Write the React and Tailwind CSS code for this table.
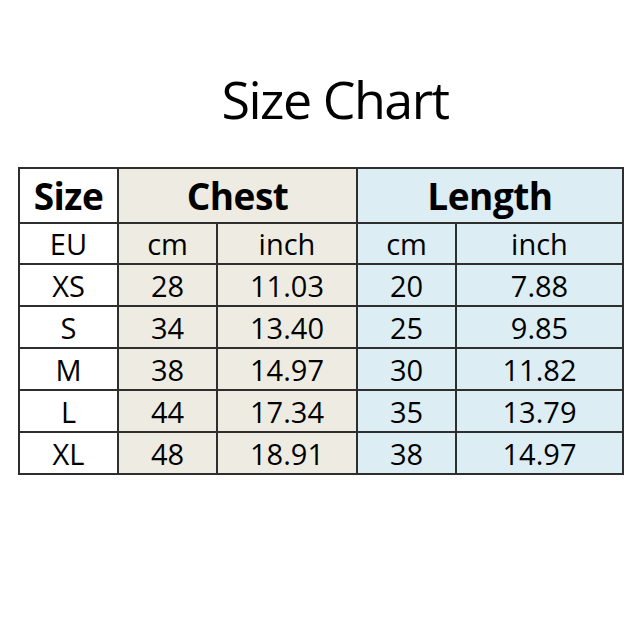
const rows = [
  ["XS", "28", "11.03", "20", "7.88"],
  ["S", "34", "13.40", "25", "9.85"],
  ["M", "38", "14.97", "30", "11.82"],
  ["L", "44", "17.34", "35", "13.79"],
  ["XL", "48", "18.91", "38", "14.97"],
];

const cell = "border-2 border-[#2e2e2e] text-center p-0 leading-none";
const beige = "bg-[#eeece2]";
const blue = "bg-[#dcedf3]";

export default function App() {
  return (
    <div
      className="w-[640px] h-[640px] bg-white text-black"
      style={{ fontFamily: '"Open Sans", "Noto Sans", sans-serif' }}
    >
      <h1 className="pt-[68px] pl-[30px] text-center text-[52px] leading-[62px] font-normal tracking-[-1.5px]">
        Size Chart
      </h1>
      <table className="mt-[37px] ml-[18px] w-[604px] border-collapse table-fixed">
        <colgroup>
          <col className="w-[99px]" />
          <col className="w-[99px]" />
          <col className="w-[140px]" />
          <col className="w-[99px]" />
          <col className="w-[167px]" />
        </colgroup>
        <tbody>
          <tr className="h-[55px] text-[37px] font-bold tracking-[-0.5px]">
            <td className={`${cell} bg-white`}>Size</td>
            <td colSpan={2} className={`${cell} ${beige}`}>
              Chest
            </td>
            <td colSpan={2} className={`${cell} ${blue}`}>
              Length
            </td>
          </tr>
          <tr className="h-[41px] text-[29px]">
            <td className={`${cell} bg-white`}>EU</td>
            <td className={`${cell} ${beige}`}>cm</td>
            <td className={`${cell} ${beige}`}>inch</td>
            <td className={`${cell} ${blue}`}>cm</td>
            <td className={`${cell} ${blue}`}>inch</td>
          </tr>
          {rows.map((r) => (
            <tr key={r[0]} className="h-[42px] text-[29px]">
              <td className={`${cell} bg-white`}>{r[0]}</td>
              <td className={`${cell} ${beige}`}>{r[1]}</td>
              <td className={`${cell} ${beige}`}>{r[2]}</td>
              <td className={`${cell} ${blue}`}>{r[3]}</td>
              <td className={`${cell} ${blue}`}>{r[4]}</td>
            </tr>
          ))}
        </tbody>
      </table>
    </div>
  );
}
